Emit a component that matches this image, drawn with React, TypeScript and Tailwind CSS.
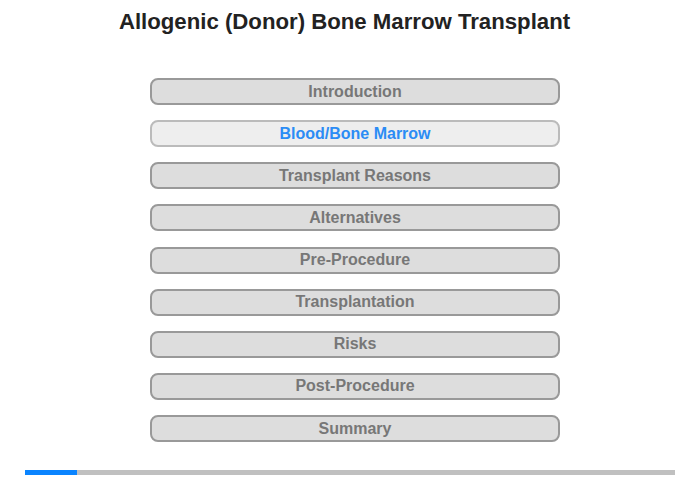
const items = [
  "Introduction",
  "Blood/Bone Marrow",
  "Transplant Reasons",
  "Alternatives",
  "Pre-Procedure",
  "Transplantation",
  "Risks",
  "Post-Procedure",
  "Summary",
];

export default function App() {
  const active = 1;
  return (
    <div className="w-[700px] h-[480px] bg-white font-['Liberation_Sans',Arial,sans-serif] flex flex-col items-center">
      <h1 className="mt-[9px] mr-[11px] text-[22.2px] leading-[26px] font-bold text-[#222]">
        Allogenic (Donor) Bone Marrow Transplant
      </h1>
      <div className="mt-[43px] ml-[10px] flex flex-col gap-[15.15px]">
        {items.map((label, i) => (
          <button
            key={label}
            className={
              i === active
                ? "w-[410px] h-[27px] rounded-[8px] border-2 border-[#bbb] bg-[#eee] text-[#2b8cf5] text-[16px] font-bold leading-none"
                : "w-[410px] h-[27px] rounded-[8px] border-2 border-[#999] bg-[#ddd] text-[#777] text-[16px] font-bold leading-none"
            }
          >
            {label}
          </button>
        ))}
      </div>
      <div className="mt-[28px] w-[650px] h-[5px] bg-[#c0c0c0]">
        <div className="h-full bg-[#0a84ff]" style={{ width: 52 }} />
      </div>
    </div>
  );
}
